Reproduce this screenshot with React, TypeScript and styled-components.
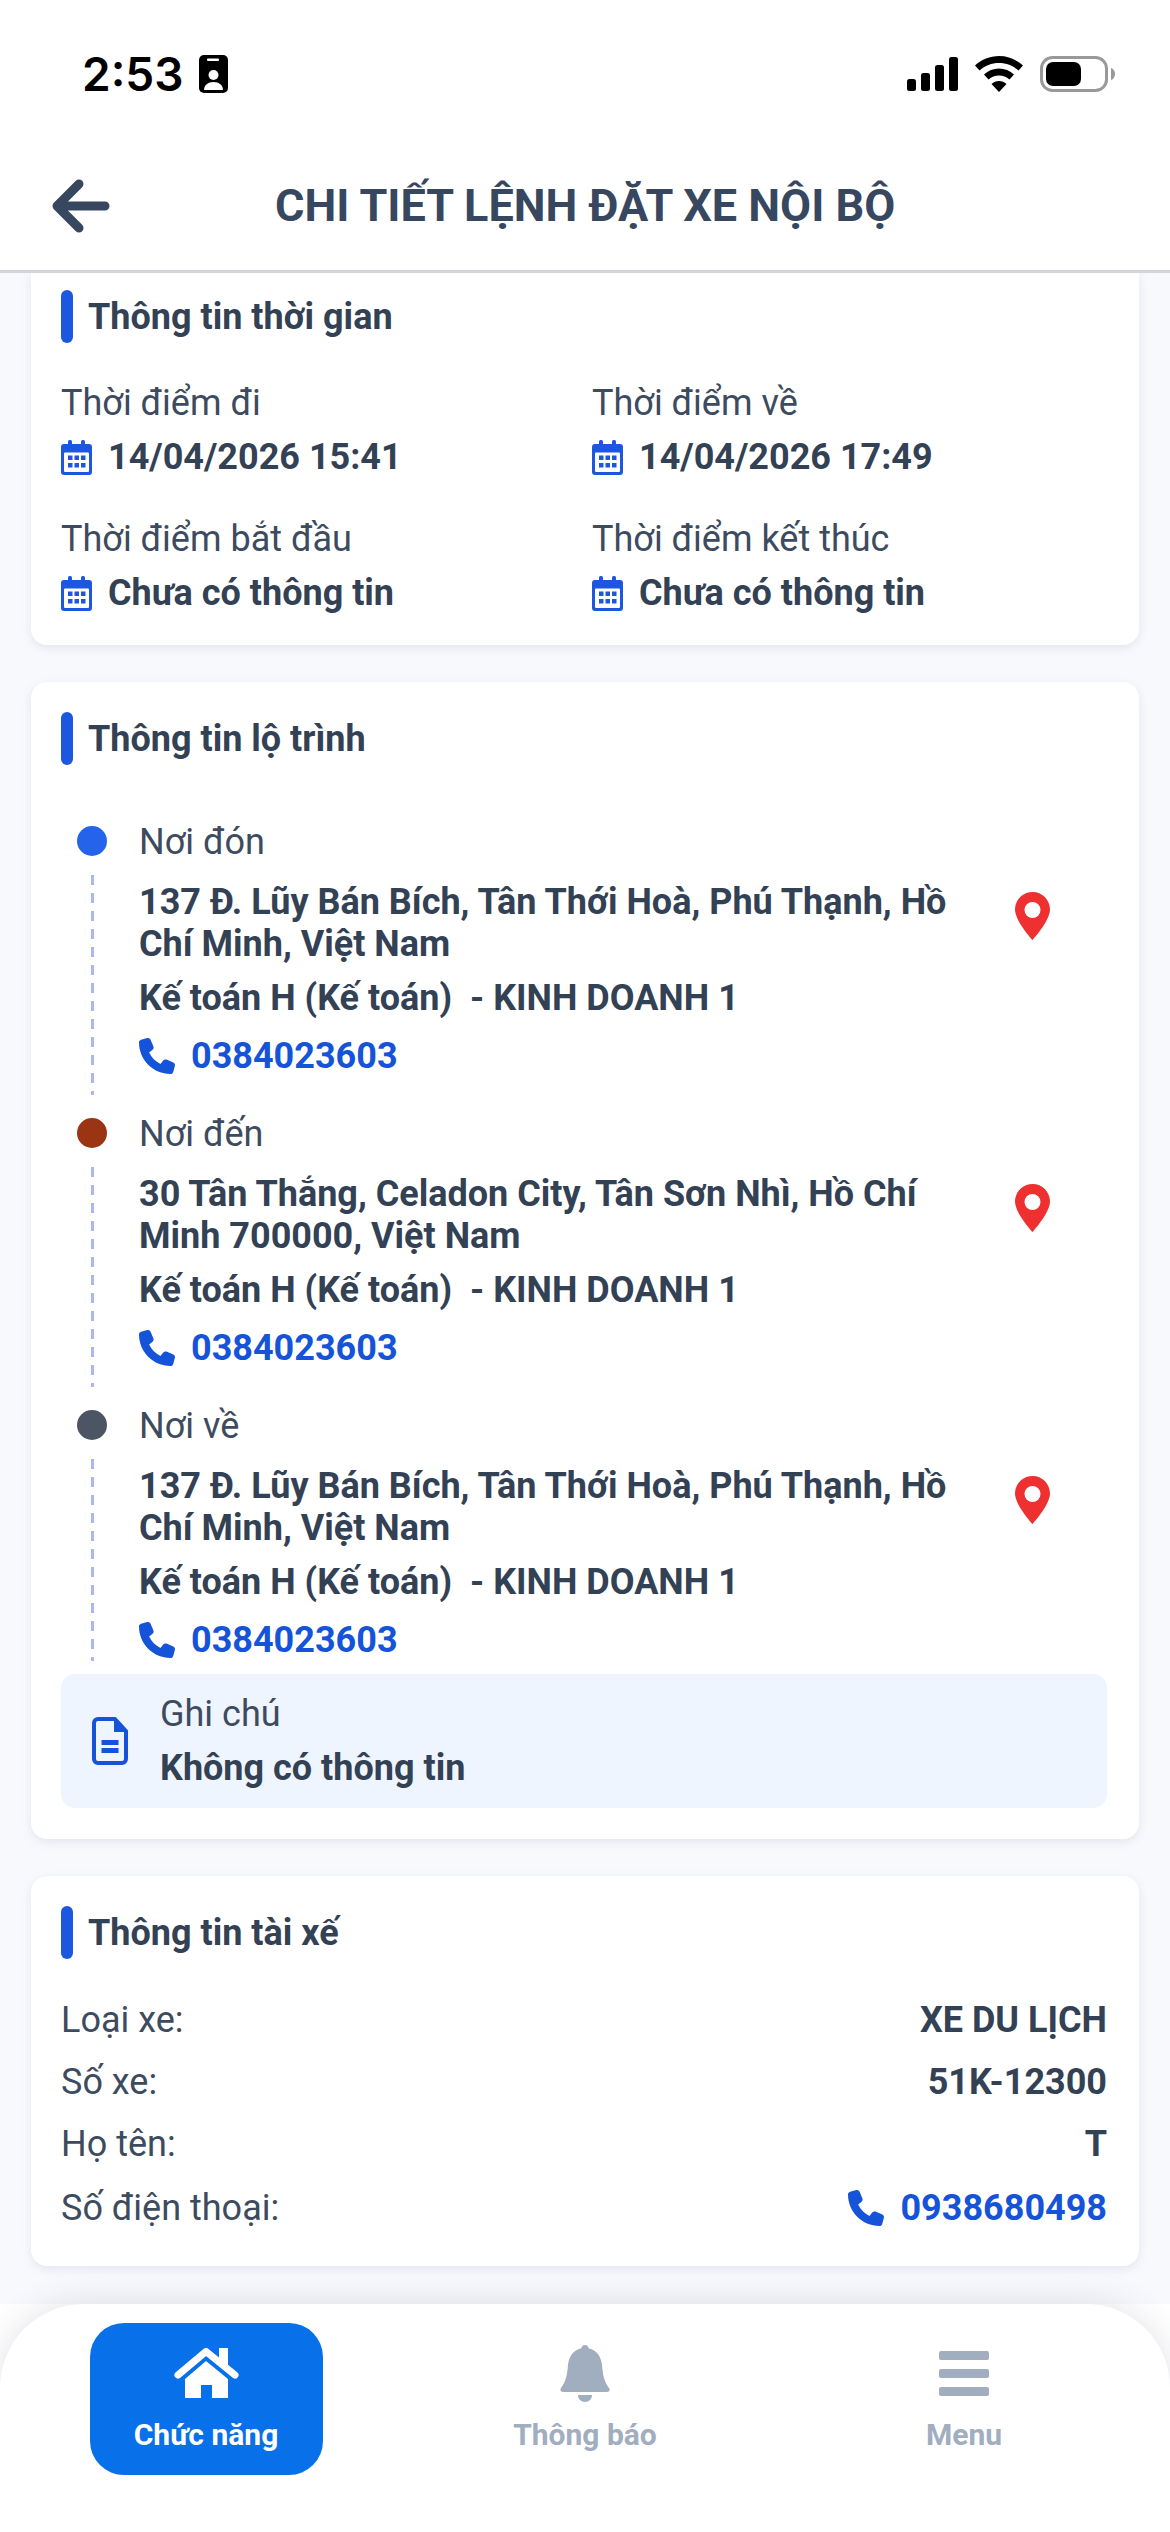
import React from 'react';
import styled, { createGlobalStyle } from 'styled-components';
import { FaPhone } from 'react-icons/fa6';

const GlobalStyle = createGlobalStyle`
  html, body {
    margin: 0;
    padding: 0;
    background: #fff;
  }
  * {
    box-sizing: border-box;
  }
`;

const Page = styled.div`
  width: 1170px;
  height: 2532px;
  display: flex;
  flex-direction: column;
  overflow: hidden;
  background: #f8f9fd;
  font-family: Roboto, "Noto Sans", sans-serif;
  color: #334155;
`;

const StatusBar = styled.div`
  height: 135px;
  flex: none;
  background: #fff;
  display: flex;
  align-items: flex-start;
  justify-content: space-between;
  padding: 53px 55px 0 82px;
`;

const StatusLeft = styled.div`
  display: flex;
  align-items: center;
  gap: 15px;
`;

const Clock = styled.span`
  font-family: Inter, "Liberation Sans", sans-serif;
  font-weight: 600;
  font-size: 46px;
  line-height: 42px;
  color: #000;
`;

const StatusRight = styled.div`
  display: flex;
  align-items: center;
  gap: 17px;
  height: 42px;
`;

const Header = styled.header`
  height: 138px;
  flex: none;
  background: #fff;
  border-bottom: 3px solid #d4d4d8;
  display: flex;
  align-items: center;
  padding: 6px 0 0 52px;
`;

const BackButton = styled.svg`
  width: 58px;
  height: 54px;
  flex: none;
`;

const HeaderTitle = styled.h1`
  margin: 0 0 0 165px;
  font-size: 45px;
  font-weight: 700;
  color: #374760;
`;

const Content = styled.main`
  flex: 1;
  min-height: 0;
  overflow: hidden;
  padding: 0 31px;
  display: flex;
  flex-direction: column;
  gap: 37px;
`;

const Card = styled.section`
  background: #fff;
  border-radius: 0 0 16px 16px;
  box-shadow: 0 3px 10px rgba(100, 110, 140, 0.14);
  padding: 17px 32px 31px 30px;

  & + & {
    border-radius: 16px;
    padding-top: 30px;
  }
`;

const SectionTitle = styled.h2`
  margin: 0;
  height: 53px;
  display: flex;
  align-items: center;
  gap: 15px;
  font-size: 36px;
  font-weight: 700;
  color: #334155;

  &::before {
    content: '';
    width: 12px;
    height: 53px;
    border-radius: 6px;
    background: #1d57e0;
  }
`;

const TimeGrid = styled.div`
  display: grid;
  grid-template-columns: 531px 1fr;
  row-gap: 40px;
  margin-top: 39px;
`;

const TimeCell = styled.div`
  display: flex;
  flex-direction: column;
  gap: 12px;
`;

const Label = styled.div`
  font-size: 36px;
  line-height: 42px;
  font-weight: 400;
  color: #3d4b5f;
`;

const Strong = styled.div`
  font-size: 36px;
  line-height: 42px;
  font-weight: 700;
  color: #334155;
`;

const DateValue = styled(Strong)`
  display: flex;
  align-items: center;
  gap: 16px;

  svg {
    flex: none;
  }
`;

const Timeline = styled.div`
  margin-top: 43px;
  padding-left: 16px;
  display: flex;
  flex-direction: column;
`;

const Stop = styled.div`
  display: grid;
  grid-template-columns: 30px 840px 1fr;
  column-gap: 32px;
  height: 292px;

  &:last-child {
    height: 282px;
    padding-bottom: 8px;
  }
`;

const Rail = styled.div`
  display: flex;
  flex-direction: column;
  align-items: center;
  padding-top: 18px;
  gap: 19px;
`;

const Dot = styled.span<{ $color: string }>`
  width: 30px;
  height: 30px;
  flex: none;
  border-radius: 50%;
  background: ${(p) => p.$color};
`;

const Dashes = styled.span`
  flex: 1;
  width: 3px;
  margin-bottom: 5px;
  background: repeating-linear-gradient(to bottom, #a9b8f3 0 10px, transparent 10px 18px);
`;

const StopBody = styled.div`
  padding-top: 13px;
`;

const Address = styled(Strong)`
  margin-top: 18px;
`;

const Person = styled(Strong)`
  margin-top: 12px;
  white-space: pre;
`;

const PhoneLink = styled.a`
  display: flex;
  align-items: center;
  gap: 16px;
  font-size: 36px;
  line-height: 42px;
  font-weight: 700;
  color: #1553d8;
  text-decoration: none;

  svg {
    flex: none;
  }
`;

const StopPhone = styled(PhoneLink)`
  margin-top: 16px;
`;

const PinCell = styled.div`
  padding-top: 84px;
  margin-left: 4px;
`;

const Note = styled.div`
  height: 134px;
  border-radius: 14px;
  background: #eff5fe;
  display: flex;
  align-items: center;
  gap: 32px;
  padding: 0 31px;
`;

const NoteText = styled.div`
  display: flex;
  flex-direction: column;
  gap: 12px;
`;

const DriverRows = styled.div`
  margin-top: 40px;
  padding-bottom: 6px;
  display: flex;
  flex-direction: column;
  gap: 20px;
`;

const DriverRow = styled.div`
  display: flex;
  align-items: center;
  justify-content: space-between;

  &:last-child {
    margin-top: 2px;
  }
`;

const Dock = styled.div`
  flex: none;
  height: 228px;
  background: #fff;
  position: relative;
`;

const TabBar = styled.nav`
  height: 100%;
  background: #fff;
  border-radius: 84px 84px 0 0;
  box-shadow: 0 0 36px rgba(40, 50, 80, 0.14);
  display: grid;
  grid-template-columns: 412px 346px 412px;
  padding-top: 19px;
`;

const Tab = styled.div<{ $active?: boolean }>`
  justify-self: center;
  align-self: start;
  width: 233px;
  height: 152px;
  border-radius: 34px;
  background: ${(p) => (p.$active ? '#0870e8' : 'transparent')};
  color: ${(p) => (p.$active ? '#fff' : '#a0aec0')};
  display: flex;
  flex-direction: column;
  align-items: center;
  padding-top: 22px;
  gap: 16px;
  font-size: 30px;
  line-height: 36px;
  font-weight: 700;
`;

const TabIcon = styled.div`
  height: 56px;
  display: flex;
  align-items: center;
  justify-content: center;
`;

const MenuBars = styled.div`
  width: 50px;
  display: flex;
  flex-direction: column;
  gap: 9px;

  span {
    height: 9px;
    border-radius: 2px;
    background: #a0aec0;
  }
`;

const stops = [
  { label: 'Nơi đón', color: '#2563eb', address: '137 Đ. Lũy Bán Bích, Tân Thới Hoà, Phú Thạnh, Hồ Chí Minh, Việt Nam' },
  { label: 'Nơi đến', color: '#9a3412', address: '30 Tân Thắng, Celadon City, Tân Sơn Nhì, Hồ Chí Minh 700000, Việt Nam' },
  { label: 'Nơi về', color: '#4b5563', address: '137 Đ. Lũy Bán Bích, Tân Thới Hoà, Phú Thạnh, Hồ Chí Minh, Việt Nam' },
];

const times = [
  { label: 'Thời điểm đi', value: '14/04/2026 15:41' },
  { label: 'Thời điểm về', value: '14/04/2026 17:49' },
  { label: 'Thời điểm bắt đầu', value: 'Chưa có thông tin' },
  { label: 'Thời điểm kết thúc', value: 'Chưa có thông tin' },
];

const ContactCard = () => (
  <svg width="29" height="38" viewBox="0 0 29 38">
    <rect width="29" height="38" rx="5" fill="#000" />
    <rect x="8" y="3.500" width="12" height="2.500" rx="1" fill="#fff" />
    <circle cx="14.500" cy="20" r="5" fill="#fff" />
    <path d="M5 35c0-5 4-8 9.500-8s9.500 3 9.500 8z" fill="#fff" />
  </svg>
);

const SignalIcon = () => (
  <svg width="51" height="34" viewBox="0 0 51 34" fill="#000">
    <rect x="0" y="22" width="9" height="12" rx="2.500" />
    <rect x="14" y="16" width="9" height="18" rx="2.500" />
    <rect x="28" y="8" width="9" height="26" rx="2.500" />
    <rect x="42" y="0" width="9" height="34" rx="2.500" />
  </svg>
);

const WifiIcon = () => (
  <svg width="48" height="36" viewBox="0 0 48 36" fill="#000">
    <path d="M24 0c9 0 17.500 3.500 24 9.500l-4.500 5C38 9.500 31.500 7 24 7S10 9.500 4.500 14.500L0 9.500C6.500 3.500 15 0 24 0z" />
    <path d="M24 12.500c5.500 0 11 2 15 6l-4.500 5c-3-2.700-6.500-4-10.500-4s-7.500 1.300-10.500 4L9 18.500c4-4 9.500-6 15-6z" />
    <path d="M24 25c2.800 0 5.500 1 7.500 3L24 36l-7.500-8c2-2 4.700-3 7.500-3z" />
  </svg>
);

const BatteryIcon = () => (
  <svg width="75" height="36" viewBox="0 0 75 36">
    <rect x="1.500" y="1.500" width="65" height="33" rx="11" fill="none" stroke="#999" strokeWidth="3" />
    <rect x="6" y="6" width="35" height="24" rx="7" fill="#000" />
    <path d="M71 12c3 1 4 3.500 4 6s-1 5-4 6z" fill="#999" />
  </svg>
);

const BackArrow = () => (
  <BackButton viewBox="0 0 58 54" fill="none" stroke="#374760" strokeWidth="9" strokeLinecap="round" strokeLinejoin="round">
    <path d="M53 27H6M27 5L5 27l22 22" />
  </BackButton>
);

const CalendarIcon = () => (
  <svg width="31" height="35" viewBox="0 0 31 35" fill="#1d57e0">
    <rect x="7" y="0" width="4" height="8" rx="1.500" />
    <rect x="20" y="0" width="4" height="8" rx="1.500" />
    <rect x="0" y="4" width="31" height="31" rx="3" />
    <rect x="3" y="12.500" width="25" height="19.500" rx="1" fill="#fff" />
    <rect x="7" y="15.500" width="4.500" height="4.500" />
    <rect x="13.500" y="15.500" width="4.500" height="4.500" />
    <rect x="20" y="15.500" width="4.500" height="4.500" />
    <rect x="7" y="23" width="4.500" height="4.500" />
    <rect x="13.500" y="23" width="4.500" height="4.500" />
    <rect x="20" y="23" width="4.500" height="4.500" />
  </svg>
);

const PinIcon = () => (
  <svg width="35" height="48" viewBox="0 0 35 48">
    <path
      fillRule="evenodd"
      fill="#ee3030"
      d="M17.500 0C7.800 0 0 7.800 0 17.500 0 29 17.500 48 17.500 48S35 29 35 17.500C35 7.800 27.200 0 17.500 0ZM17.500 10a8 8 0 1 1 0 16 8 8 0 0 1 0-16Z"
    />
  </svg>
);

const DocIcon = () => (
  <svg width="36" height="48" viewBox="0 0 36 48" fill="none">
    <path
      d="M6 2H23L34 14V42a4 4 0 0 1-4 4H6a4 4 0 0 1-4-4V6a4 4 0 0 1 4-4Z"
      stroke="#1553d8"
      strokeWidth="4"
      strokeLinejoin="round"
    />
    <path d="M22 2V15H34Z" fill="#1553d8" />
    <rect x="9.500" y="23" width="17" height="5" fill="#1553d8" />
    <rect x="9.500" y="31" width="17" height="5" fill="#1553d8" />
  </svg>
);

const HomeIcon = () => (
  <svg width="65" height="51" viewBox="0 0 65 51" fill="#fff">
    <path d="M45 0H54V20L45 12Z" />
    <path d="M4 27L32 3.500 61 27" fill="none" stroke="#fff" strokeWidth="7" strokeLinecap="round" strokeLinejoin="round" />
    <path d="M32 13L54 31V50H38V37H27V50H11V31Z" />
  </svg>
);

const BellIcon = () => (
  <svg width="50" height="57" viewBox="0 0 50 57" fill="#a0aec0">
    <circle cx="25" cy="3.500" r="3.500" />
    <path d="M25 3C35 3 41 10 42 20 43 31 44 36 49 43 50.500 45 49.500 47 47 47H3C.5 47-.5 45 1 43 6 36 7 31 8 20 9 10 15 3 25 3Z" />
    <path d="M18 50H32C32 54 29 57 25 57 21 57 18 54 18 50Z" />
  </svg>
);

export default function App() {
  return (
    <Page>
      <GlobalStyle />
      <StatusBar>
        <StatusLeft>
          <Clock>2:53</Clock>
          <ContactCard />
        </StatusLeft>
        <StatusRight>
          <SignalIcon />
          <WifiIcon />
          <BatteryIcon />
        </StatusRight>
      </StatusBar>

      <Header>
        <BackArrow />
        <HeaderTitle>CHI TIẾT LỆNH ĐẶT XE NỘI BỘ</HeaderTitle>
      </Header>

      <Content>
        <Card>
          <SectionTitle>Thông tin thời gian</SectionTitle>
          <TimeGrid>
            {times.map((t) => (
              <TimeCell key={t.label}>
                <Label>{t.label}</Label>
                <DateValue>
                  <CalendarIcon />
                  {t.value}
                </DateValue>
              </TimeCell>
            ))}
          </TimeGrid>
        </Card>

        <Card>
          <SectionTitle>Thông tin lộ trình</SectionTitle>
          <Timeline>
            {stops.map((s) => (
              <Stop key={s.label}>
                <Rail>
                  <Dot $color={s.color} />
                  <Dashes />
                </Rail>
                <StopBody>
                  <Label>{s.label}</Label>
                  <Address>{s.address}</Address>
                  <Person>{'Kế toán H (Kế toán)  - KINH DOANH 1'}</Person>
                  <StopPhone href="#">
                    <FaPhone size={36} />
                    0384023603
                  </StopPhone>
                </StopBody>
                <PinCell>
                  <PinIcon />
                </PinCell>
              </Stop>
            ))}
          </Timeline>
          <Note>
            <DocIcon />
            <NoteText>
              <Label>Ghi chú</Label>
              <Strong>Không có thông tin</Strong>
            </NoteText>
          </Note>
        </Card>

        <Card>
          <SectionTitle>Thông tin tài xế</SectionTitle>
          <DriverRows>
            <DriverRow>
              <Label>Loại xe:</Label>
              <Strong>XE DU LỊCH</Strong>
            </DriverRow>
            <DriverRow>
              <Label>Số xe:</Label>
              <Strong>51K-12300</Strong>
            </DriverRow>
            <DriverRow>
              <Label>Họ tên:</Label>
              <Strong>T</Strong>
            </DriverRow>
            <DriverRow>
              <Label>Số điện thoại:</Label>
              <PhoneLink href="#">
                <FaPhone size={36} />
                0938680498
              </PhoneLink>
            </DriverRow>
          </DriverRows>
        </Card>
      </Content>

      <Dock>
        <TabBar>
          <Tab $active>
            <TabIcon>
              <HomeIcon />
            </TabIcon>
            Chức năng
          </Tab>
          <Tab>
            <TabIcon>
              <BellIcon />
            </TabIcon>
            Thông báo
          </Tab>
          <Tab>
            <TabIcon>
              <MenuBars>
                <span />
                <span />
                <span />
              </MenuBars>
            </TabIcon>
            Menu
          </Tab>
        </TabBar>
      </Dock>
    </Page>
  );
}
